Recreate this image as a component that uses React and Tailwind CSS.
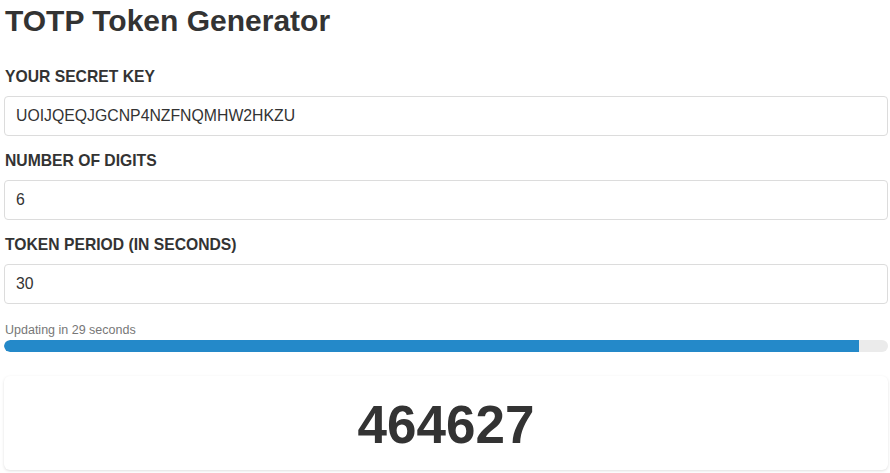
import { useState } from "react";

const fields = [
  { label: "YOUR SECRET KEY", value: "UOIJQEQJGCNP4NZFNQMHW2HKZU" },
  { label: "NUMBER OF DIGITS", value: "6" },
  { label: "TOKEN PERIOD (IN SECONDS)", value: "30" },
];

export default function App() {
  const [values, setValues] = useState(fields.map((f) => f.value));
  const remaining = 29;
  const period = 30;

  return (
    <div className="min-h-screen bg-white pl-[4px] pr-[2px] pt-[3px] text-[#333] font-['Liberation_Sans',Arial,sans-serif]">
      <h1 className="text-[30px] leading-[36px] font-bold mb-[28px] ml-[1px]">
        TOTP Token Generator
      </h1>

      {fields.map((f, i) => (
        <div key={f.label} className="mb-[15px]">
          <label className="block text-[15.7px] leading-[20px] font-bold mb-[9px] ml-[1px]">
            {f.label}
          </label>
          <input
            type="text"
            value={values[i]}
            onChange={(e) =>
              setValues((prev) => prev.map((v, j) => (j === i ? e.target.value : v)))
            }
            className="w-full h-[40px] border border-[#dcdcdc] rounded-[4px] px-[11px] text-[15.8px] text-[#333] bg-white focus:outline-none"
          />
        </div>
      ))}

      <p className="text-[12.5px] leading-[16px] text-[#777] mt-[18px] mb-[2px] ml-[1px]">
        Updating in {remaining} seconds
      </p>
      <div className="h-[12px] w-full rounded-full bg-[#ebebeb] overflow-hidden">
        <div
          className="h-full bg-[#2489c9] rounded-l-full"
          style={{ width: `${(remaining / period) * 100}%` }}
        />
      </div>

      <div className="mt-[24px] h-[94px] rounded-[6px] bg-white shadow-[0_1px_3px_rgba(0,0,0,0.13)] flex items-center justify-center">
        <span className="text-[53px] leading-none font-bold text-[#333] mt-[2px]">
          464627
        </span>
      </div>
    </div>
  );
}
